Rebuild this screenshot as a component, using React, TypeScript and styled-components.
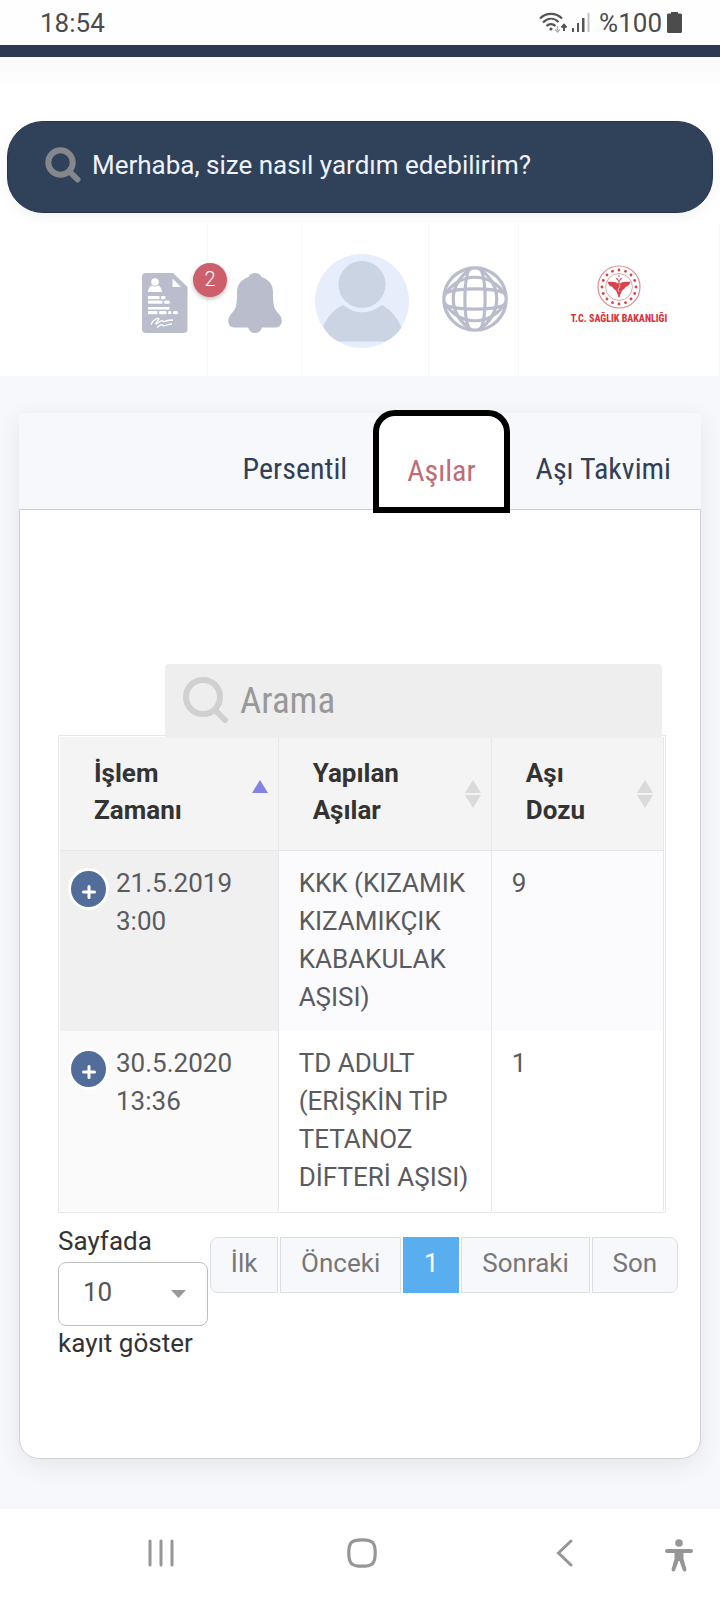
import React from 'react';
import styled, { createGlobalStyle } from 'styled-components';

const sans = `Roboto, "Liberation Sans", sans-serif`;
const condensed = `"Roboto Condensed", "Liberation Sans Narrow", Roboto, sans-serif`;

const GlobalStyle = createGlobalStyle`
  *, *::before, *::after { box-sizing: border-box; }
  body { margin: 0; background: #f7f8fc; font-family: ${sans}; font-size: 26px; }
  button, input, select { font: inherit; color: inherit; }
  button { padding: 0; border: 0; background: none; cursor: pointer; }
  svg { display: block; flex: none; }
`;

const Page = styled.div`
  display: flex;
  flex-direction: column;
  min-height: 100vh;
`;

const StatusBar = styled.div`
  display: flex;
  justify-content: space-between;
  align-items: center;
  height: 45px;
  padding: 0 38px 0 40px;
  background: #fefefe;
  color: #4b4b4b;
`;

const StatusIcons = styled.div`
  display: flex;
  align-items: center;
  gap: 5px;
`;

const BatteryLevel = styled.span`
  margin-left: 4px;
`;

const TopStripe = styled.div`
  height: 12px;
  background: #2e3850;
`;

const Header = styled.header`
  background: linear-gradient(#fafafc, #ffffff 32px);
  padding-top: 64px;
`;

const AssistantBar = styled.label`
  display: flex;
  align-items: center;
  gap: 11px;
  height: 92px;
  margin: 0 7px;
  padding: 0 37px 4px;
  border: 1px solid #26344c;
  border-radius: 36px;
  background: #30415a;
  box-shadow: 0 4px 12px rgba(40, 50, 80, 0.06);
`;

const AssistantInput = styled.input`
  flex: 1;
  min-width: 0;
  padding: 0;
  border: 0;
  outline: 0;
  background: none;
  color: #eef3fd;
  &::placeholder { color: #eef3fd; opacity: 1; }
`;

const Toolbar = styled.div`
  display: flex;
  justify-content: flex-end;
  height: 152px;
  margin-top: 11px;
`;

const Tool = styled.button<{ $width: number; $pad: string }>`
  position: relative;
  display: flex;
  flex-direction: column;
  align-items: center;
  justify-content: center;
  width: ${(p) => p.$width}px;
  padding: ${(p) => p.$pad};
  border-right: 1px solid #f7f7fa;
`;

const Badge = styled.span`
  position: absolute;
  top: 39px;
  right: -20px;
  z-index: 1;
  width: 34px;
  height: 34px;
  border-radius: 50%;
  background: #cc5f6b;
  color: #fff;
  font-size: 20px;
  font-weight: 300;
  line-height: 32px;
  text-align: center;
  box-shadow: 0 2px 4px rgba(0, 0, 0, 0.25);
`;

const MinistryName = styled.span`
  margin-top: 4px;
  color: #d9343b;
  font-family: ${condensed};
  font-size: 10px;
  font-weight: 800;
  line-height: 12px;
  white-space: nowrap;
`;

const Main = styled.main`
  flex: 1;
  padding: 37px 19px 48px;
`;

const Card = styled.section`
  border-radius: 6px 6px 20px 20px;
  box-shadow: 0 6px 24px rgba(40, 40, 60, 0.09);
`;

const Tabs = styled.div`
  display: flex;
  justify-content: flex-end;
  height: 96px;
  padding-right: 4px;
  border-radius: 6px 6px 0 0;
  background: #f7f8fc;
`;

const Tab = styled.button<{ $active?: boolean }>`
  position: relative;
  z-index: ${(p) => (p.$active ? 1 : 0)};
  padding: ${(p) => (p.$active ? '18px 28px 0' : '14px 26px 0')};
  margin: ${(p) => (p.$active ? '-3px 0 -4px' : '0')};
  border: ${(p) => (p.$active ? '6px solid #000' : '0')};
  border-radius: ${(p) => (p.$active ? '22px 22px 0 0' : '0')};
  background: ${(p) => (p.$active ? '#fff' : 'none')};
  color: ${(p) => (p.$active ? '#be6c76' : '#323f56')};
  font-family: ${condensed};
  font-size: 30px;
`;

const Panel = styled.div`
  padding: 154px 34px 96px 38px;
  border: 1px solid #cfd0d3;
  border-radius: 0 0 20px 20px;
  background: #fff;
`;

const SearchBox = styled.label`
  position: relative;
  display: flex;
  align-items: center;
  gap: 11px;
  height: 74px;
  margin: 0 4px -3px 107px;
  padding: 0 18px 2px;
  border-radius: 4px;
  background: #eeeeee;
`;

const SearchInput = styled.input`
  flex: 1;
  min-width: 0;
  padding: 0;
  border: 0;
  outline: 0;
  background: none;
  font-family: ${condensed};
  font-size: 37px;
  &::placeholder { color: #999; opacity: 1; }
`;

const TableFrame = styled.div`
  padding: 1px;
  border: 1px solid #e6e7ea;
`;

const Table = styled.table`
  width: 100%;
  table-layout: fixed;
  border-collapse: separate;
  border-spacing: 0;
`;

const HeadCell = styled.th`
  height: 114px;
  padding: 0 10px 3px 34px;
  border-right: 1px solid #e6e7ea;
  border-bottom: 1px solid #e6e7ea;
  background: #f4f4f4;
  color: #333;
  font-weight: 700;
  line-height: 37px;
  text-align: left;
`;

const HeadContent = styled.button`
  display: flex;
  align-items: center;
  justify-content: space-between;
  width: 100%;
  text-align: left;

  svg { margin-top: 4px; }
`;

const Cell = styled.td<{ $bg: string }>`
  height: 180px;
  padding: 13px 10px 15px 20px;
  border-right: 1px solid #e6e7ea;
  background: ${(p) => p.$bg};
  color: #5a5a5f;
  line-height: 38px;
  vertical-align: top;
`;

const DateCell = styled(Cell)`
  padding-left: 8px;
`;

const DateContent = styled.div`
  display: flex;
  align-items: flex-start;
  gap: 7px;
`;

const ExpandButton = styled.button`
  display: flex;
  flex: none;
  align-items: center;
  justify-content: center;
  width: 41px;
  height: 42px;
  margin-top: 4px;
  padding-top: 6px;
  border: 3px solid #fff;
  border-radius: 50%;
  background: #536d9b;
`;

const TableFooter = styled.div`
  display: flex;
  align-items: flex-start;
  margin-right: -12px;
`;

const LengthControl = styled.label`
  display: flex;
  flex-direction: column;
  width: 150px;
  padding-top: 9px;
  margin-right: 2px;
  color: #333;
  line-height: 38px;
`;

const SelectWrap = styled.span`
  position: relative;
  display: block;
  margin: 2px 0 -2px;
`;

const LengthSelect = styled.select`
  appearance: none;
  width: 150px;
  height: 64px;
  padding: 0 24px 4px;
  border: 1px solid #bfbfbf;
  border-radius: 8px;
  background: #fff;
  color: #555;
`;

const SelectArrow = styled.svg`
  position: absolute;
  right: 22px;
  top: 28px;
  pointer-events: none;
`;

const Pager = styled.nav`
  display: flex;
  flex: 1;
  gap: 2px;
  padding-top: 24px;
`;

const PageButton = styled.button<{ $active?: boolean }>`
  flex: 1 1 auto;
  height: 56px;
  padding: 0 19px 4px;
  border: 1px solid ${(p) => (p.$active ? '#58aeef' : '#dddee1')};
  background: ${(p) => (p.$active ? '#58aeef' : '#f7f8fc')};
  color: ${(p) => (p.$active ? '#fff' : '#777')};
  &:first-child { border-radius: 8px 0 0 8px; }
  &:last-child { border-radius: 0 8px 8px 0; }
`;

const SystemNav = styled.nav`
  display: flex;
  justify-content: space-between;
  align-items: center;
  height: 91px;
  padding: 0 27px 3px 147px;
  background: #fff;
  color: #969696;
`;

const NavButton = styled.button<{ $right?: number; $top?: number }>`
  display: flex;
  padding-right: ${(p) => p.$right ?? 0}px;
  padding-top: ${(p) => p.$top ?? 0}px;
`;

const BackGroup = styled.div`
  display: flex;
  align-items: center;
  gap: 92px;
`;

function Magnifier() {
  return (
    <svg width="46" height="46" viewBox="0 0 46 46" fill="none" stroke="#d0d0d0" aria-hidden="true">
      <circle cx="20" cy="20" r="17" strokeWidth="6" />
      <path d="M32 33 L42 43" strokeWidth="6" strokeLinecap="round" />
    </svg>
  );
}

function BoldMagnifier() {
  return (
    <svg width="36" height="36" viewBox="0 0 36 36" fill="none" stroke="#85878c" aria-hidden="true">
      <circle cx="15.5" cy="15.5" r="12.2" strokeWidth="6" />
      <path d="M24.5 24.5 L32.5 32.5" strokeWidth="6" strokeLinecap="round" />
    </svg>
  );
}

function WifiIcon() {
  return (
    <svg width="28" height="22" viewBox="0 0 28 22" fill="none" stroke="#555" strokeWidth="2.2" aria-hidden="true">
      <path d="M1 6.5 C7 .2 17 .2 23 6.5" />
      <path d="M4 10.5 C9 5.6 15 5.6 19.5 10" />
      <path d="M7.5 14 C10 11.5 14 11.5 16.5 14" />
      <circle cx="12" cy="17" r="1.6" fill="#555" stroke="none" />
      <path d="M18.5 14 V20 M16 17.5 L18.5 20 L21 17.5" stroke="#b5b5b5" strokeWidth="1.5" />
      <path d="M25 19 V13 M22.5 15.5 L25 12.8 L27.5 15.5" strokeWidth="2" />
    </svg>
  );
}

function SignalIcon() {
  return (
    <svg width="18" height="20" viewBox="0 0 18 20" aria-hidden="true">
      <g fill="#555">
        <rect x="0" y="15" width="2" height="4" />
        <rect x="5" y="10" width="2" height="9" />
        <rect x="10" y="5" width="2.5" height="14" />
      </g>
      <rect x="15.5" y="0" width="2" height="19" fill="#c2c2c2" />
    </svg>
  );
}

function BatteryIcon() {
  return (
    <svg width="15" height="21" viewBox="0 0 15 21" fill="#4c4c4c" aria-hidden="true">
      <path d="M4 0 H11 V1.5 H13.5 Q15 1.5 15 3 V19.5 Q15 21 13.5 21 H1.5 Q0 21 0 19.5 V3 Q0 1.5 1.5 1.5 H4 Z" />
    </svg>
  );
}

function DocumentIcon() {
  return (
    <svg width="46" height="60" viewBox="0 0 46 60" aria-hidden="true">
      <path d="M4 0 H31 L45.5 14 V56 Q45.5 60 41.5 60 H4 Q0 60 0 56 V4 Q0 0 4 0 Z" fill="#b9bdcc" />
      <g fill="#fff">
        <path d="M30.5 5.5 V14 H39 Z" />
        <circle cx="13" cy="9" r="3.8" />
        <path d="M6 19 Q6.5 13.5 10 12.5 Q13 14.5 16 12.5 Q19.5 13.5 20 19 Z" />
        <rect x="6" y="23" width="11.5" height="3.2" />
        <rect x="19" y="23" width="4.5" height="3.2" rx="1" />
        <rect x="6" y="27.5" width="14.5" height="3.2" />
        <rect x="22" y="27.5" width="6" height="3.2" rx="1.5" />
        <rect x="6" y="34" width="21.5" height="2.6" />
        <rect x="6" y="38" width="9.5" height="3.2" />
        <rect x="17" y="38" width="7.5" height="3.2" rx="1" />
        <rect x="26" y="38" width="3.5" height="3.2" rx="1.5" />
        <rect x="31" y="38" width="5" height="3.2" rx="1.5" />
      </g>
      <path d="M9 51.5 C11 47 15 44.5 17 46 C16.5 47.5 13 50 14 51 C16 50.5 19 46.5 21 48 C21 50 23 47 31 47 M15 54.5 C18 51.5 21 51 21 52.5 C21 54 26 51 30 51" fill="none" stroke="#fff" strokeWidth="1.3" />
    </svg>
  );
}

function BellIcon() {
  return (
    <svg width="54" height="60" viewBox="0 0 54 60" fill="#b9bdcc" aria-hidden="true">
      <path d="M27 0 C30 0 32.5 1.5 33.5 4 C41 6.5 45 12 45 19 C45 33 46 36 51 41 C56 47 54 54.5 47 54.5 H34 C33 58 30.5 60 27 60 C23.5 60 21 58 20 54.5 H7 C0 54.5 -2 47 3 41 C8 36 9 33 9 19 C9 12 13 6.5 20.5 4 C21.5 1.5 24 0 27 0 Z" />
    </svg>
  );
}

function AvatarIcon() {
  return (
    <svg width="94" height="94" viewBox="0 0 94 94" aria-hidden="true">
      <circle cx="47" cy="47" r="47" fill="#e6edfb" />
      <circle cx="47" cy="30.5" r="23.5" fill="#cad4e2" />
      <path d="M28 51 Q47 66 67 51 Q80 58 86.5 73.5 Q80 83 70.5 87.5 H23.5 Q14 83 8 72.5 Q15 57 28 51 Z" fill="#cad4e2" />
    </svg>
  );
}

function GlobeIcon() {
  return (
    <svg width="66" height="66" viewBox="0 0 66 66" fill="none" stroke="#b9bcca" strokeWidth="3.2" aria-hidden="true">
      <circle cx="33" cy="33" r="31.2" />
      <path d="M27 3 C21.5 16 21.5 50 27 63 M39 3 C44.5 16 44.5 50 39 63" />
      <path d="M30 2 C5 17 5 49 30 64 M36 2 C61 17 61 49 36 64" />
      <path d="M3 27 C16 21.5 50 21.5 63 27 M3 39 C16 44.5 50 44.5 63 39" />
      <path d="M2 30 C17 5 49 5 64 30 M2 36 C17 61 49 61 64 36" />
    </svg>
  );
}

function MinistryEmblem() {
  const stars = Array.from({ length: 16 }, (_, i) => {
    const angle = (i * Math.PI) / 8;
    return <circle key={i} cx={22 + 17 * Math.sin(angle)} cy={22 - 17 * Math.cos(angle)} r="1.4" />;
  });
  return (
    <svg width="44" height="44" viewBox="0 0 44 44" aria-hidden="true">
      <g fill="none" stroke="#e58a8e">
        <circle cx="22" cy="22" r="21" strokeWidth="1.2" />
        <circle cx="22" cy="22" r="13.4" strokeWidth=".8" />
      </g>
      <g fill="#d6454c">
        {stars}
        <path d="M21 18.5 C18 16 14 17 10.5 16.5 C11 19.5 13 21.5 15.5 22 C16.5 24.5 18.5 24.5 19.5 26.5 L22 33 L24.5 26.5 C25.5 24.5 27.5 24.5 28.5 22 C31 21.5 33 19.5 33.5 16.5 C30 17 26 16 23 18.5 Z" />
      </g>
      <path d="M19.5 13 Q22 18 24.5 13 M22 15 V32" fill="none" stroke="#d6454c" strokeWidth="1.2" />
      <path d="M22 19 Q24 21 22 23 Q20 25 22 27" fill="none" stroke="#fff" strokeWidth=".6" />
      <circle cx="22" cy="11" r=".8" fill="#d6454c" />
    </svg>
  );
}

function SortIcon({ ascending }: { ascending?: boolean }) {
  return (
    <svg width="16" height="28" viewBox="0 0 16 28" aria-hidden="true">
      <path d="M8 0 L16 13 H0 Z" fill={ascending ? '#8284e0' : '#dadada'} />
      {!ascending && <path d="M0 15 H16 L8 28 Z" fill="#dadada" />}
    </svg>
  );
}

const columns = [
  { first: 'İşlem', second: 'Zamanı', ascending: true },
  { first: 'Yapılan', second: 'Aşılar' },
  { first: 'Aşı', second: 'Dozu' },
];

const records = [
  { day: '21.5.2019', time: '3:00', vaccine: 'KKK (KIZAMIK KIZAMIKÇIK KABAKULAK AŞISI)', dose: 9, sorted: '#f0f0f0', bg: '#fbfbfd' },
  { day: '30.5.2020', time: '13:36', vaccine: 'TD ADULT (ERİŞKİN TİP TETANOZ DİFTERİ AŞISI)', dose: 1, sorted: '#fafafa', bg: '#ffffff' },
];

export default function App() {
  return (
    <Page>
      <GlobalStyle />
      <StatusBar>
        <span>18:54</span>
        <StatusIcons>
          <WifiIcon />
          <SignalIcon />
          <BatteryLevel>%100</BatteryLevel>
          <BatteryIcon />
        </StatusIcons>
      </StatusBar>
      <TopStripe />
      <Header>
        <AssistantBar>
          <BoldMagnifier />
          <AssistantInput placeholder="Merhaba, size nasıl yardım edebilirim?" aria-label="Yardım" />
        </AssistantBar>
        <Toolbar>
          <Tool $width={86} $pad="6px 0 0" aria-label="Belgeler">
            <DocumentIcon />
            <Badge>2</Badge>
          </Tool>
          <Tool $width={94} $pad="6px 0 0" aria-label="Bildirimler"><BellIcon /></Tool>
          <Tool $width={127} $pad="2px 6px 0 0" aria-label="Profil"><AvatarIcon /></Tool>
          <Tool $width={90} $pad="0 0 2px 2px" aria-label="Dil"><GlobeIcon /></Tool>
          <Tool $width={201} $pad="0 0 10px">
            <MinistryEmblem />
            <MinistryName>T.C. SAĞLIK BAKANLIĞI</MinistryName>
          </Tool>
        </Toolbar>
      </Header>

      <Main>
        <Card>
          <Tabs role="tablist">
            <Tab role="tab">Persentil</Tab>
            <Tab role="tab" aria-selected $active>Aşılar</Tab>
            <Tab role="tab">Aşı Takvimi</Tab>
          </Tabs>
          <Panel>
            <SearchBox>
              <Magnifier />
              <SearchInput placeholder="Arama" aria-label="Arama" />
            </SearchBox>
            <TableFrame>
              <Table>
                <colgroup>
                  <col style={{ width: '36.2%' }} />
                  <col style={{ width: '35.3%' }} />
                  <col />
                </colgroup>
                <thead>
                  <tr>
                    {columns.map((c) => (
                      <HeadCell key={c.first}>
                        <HeadContent>
                          <span>{c.first}<br />{c.second}</span>
                          <SortIcon ascending={c.ascending} />
                        </HeadContent>
                      </HeadCell>
                    ))}
                  </tr>
                </thead>
                <tbody>
                  {records.map((r) => (
                    <tr key={r.day}>
                      <DateCell $bg={r.sorted}>
                        <DateContent>
                          <ExpandButton aria-label="Ayrıntı">
                            <svg width="14" height="14" viewBox="0 0 14 14" stroke="#fff" strokeWidth="3" strokeLinecap="round" aria-hidden="true">
                              <path d="M7 1.5 V12.5 M1.5 7 H12.5" />
                            </svg>
                          </ExpandButton>
                          <span>{r.day}<br />{r.time}</span>
                        </DateContent>
                      </DateCell>
                      <Cell $bg={r.bg}>{r.vaccine}</Cell>
                      <Cell $bg={r.bg}>{r.dose}</Cell>
                    </tr>
                  ))}
                </tbody>
              </Table>
            </TableFrame>
            <TableFooter>
              <LengthControl>
                Sayfada
                <SelectWrap>
                  <LengthSelect defaultValue="10">
                    <option>10</option>
                    <option>25</option>
                    <option>50</option>
                  </LengthSelect>
                  <SelectArrow width="15" height="8" viewBox="0 0 15 8" aria-hidden="true">
                    <path d="M0 0 H15 L7.5 8 Z" fill="#999" />
                  </SelectArrow>
                </SelectWrap>
                kayıt göster
              </LengthControl>
              <Pager>
                <PageButton>İlk</PageButton>
                <PageButton>Önceki</PageButton>
                <PageButton $active>1</PageButton>
                <PageButton>Sonraki</PageButton>
                <PageButton>Son</PageButton>
              </Pager>
            </TableFooter>
          </Panel>
        </Card>
      </Main>

      <SystemNav>
        <NavButton aria-label="Son uygulamalar">
          <svg width="28" height="28" viewBox="0 0 28 28" stroke="currentColor" strokeWidth="3" strokeLinecap="round" aria-hidden="true">
            <path d="M3 2 V26 M14 2 V26 M25 2 V26" />
          </svg>
        </NavButton>
        <NavButton $right={8} aria-label="Ana ekran">
          <svg width="30" height="30" viewBox="0 0 30 30" fill="none" stroke="currentColor" strokeWidth="3.2" aria-hidden="true">
            <path d="M15 1.8 C25.500 1.8 28.2 4.5 28.2 15 C28.2 25.5 25.5 28.2 15 28.2 C4.500 28.2 1.8 25.500 1.8 15 C1.8 4.500 4.500 1.8 15 1.8 Z" />
          </svg>
        </NavButton>
        <BackGroup>
          <NavButton aria-label="Geri">
            <svg width="17" height="28" viewBox="0 0 17 28" fill="none" stroke="currentColor" strokeWidth="3" strokeLinecap="round" aria-hidden="true">
              <path d="M15 2 L2.5 14 L15 26" />
            </svg>
          </NavButton>
          <NavButton $top={4} aria-label="Erişilebilirlik">
            <svg width="28" height="33" viewBox="0 0 28 33" fill="currentColor" aria-hidden="true">
              <circle cx="14" cy="4" r="3.8" />
              <path d="M2 10 H26 Q28 10 28 12 Q28 14 26 14 H18.5 V20 L21.500 30.500 Q21.500 32.500 19.700 32.500 Q18.200 32.500 17.700 31 L14.500 22 H13.500 L10.300 31 Q9.800 32.500 8.300 32.500 Q6.500 32.500 6.500 30.500 L9.5 20 V14 H2 Q0 14 0 12 Q0 10 2 10 Z" />
            </svg>
          </NavButton>
        </BackGroup>
      </SystemNav>
    </Page>
  );
}
